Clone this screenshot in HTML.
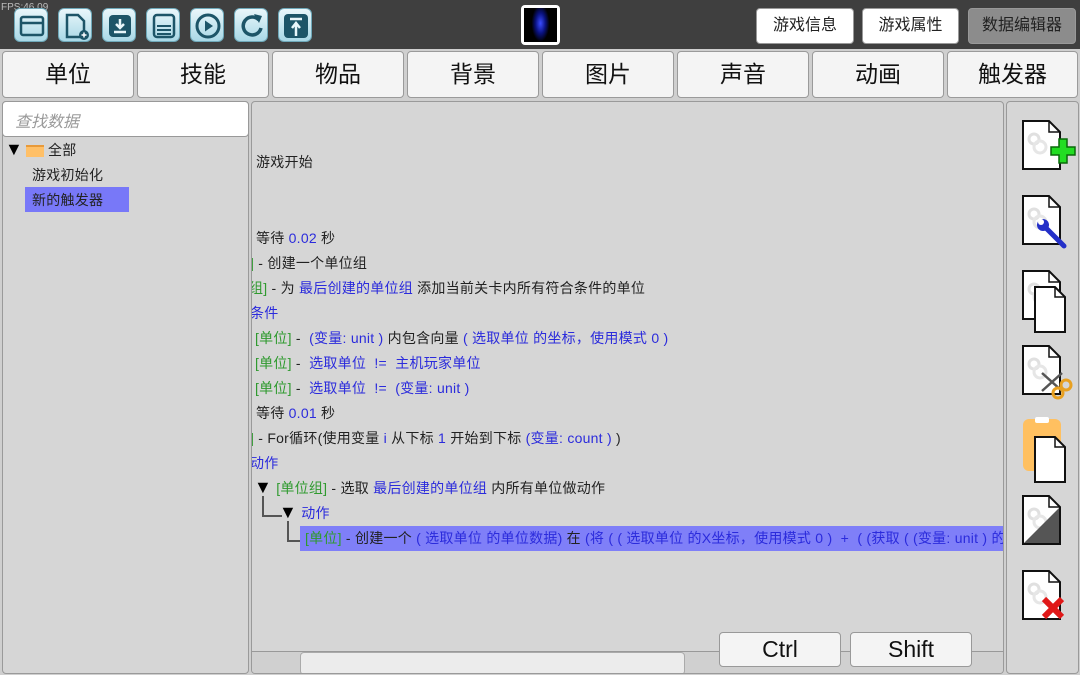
<!DOCTYPE html>
<html><head><meta charset="utf-8"><style>
*{margin:0;padding:0;box-sizing:border-box}
body{width:1080px;height:675px;background:#3f3f3f;position:relative;overflow:hidden;font-family:"Liberation Sans","Noto Sans CJK SC",sans-serif}
.abs{position:absolute}
.tb{position:absolute;top:8px;width:34px;height:34px;border-radius:6px;background:linear-gradient(#eaf7fb,#a9d8e6);border:1px solid #6fa9ba}
.tb svg{position:absolute;left:0;top:0}
.btn{position:absolute;top:8px;height:36px;background:#fff;border:1px solid #999;border-radius:4px;font-size:16px;color:#222;text-align:center;line-height:34px}
.tab{position:absolute;top:51px;height:47px;background:#f4f4f4;border:1px solid #9a9a9a;border-radius:4px;font-size:23px;color:#111;text-align:center;line-height:45px}
.panel{position:absolute;background:#d6d6d6;border:1px solid #9a9a9a;border-radius:4px}
.ln{position:absolute;white-space:nowrap;font-size:14px;color:#222;line-height:16px;letter-spacing:0.25px}
.b{color:#2b2bdc}.g{color:#2f9a2f}
.tri{font-size:18px;color:#000}
.kb{position:absolute;top:632px;height:35px;background:#f4f4f4;border:1px solid #999;border-radius:4px;font-size:23px;text-align:center;line-height:33px;color:#111}
</style></head><body>
<div class="abs" style="left:1px;top:2px;font-size:10px;color:#bbb">FPS:46.09</div>
<div class="tb" style="left:14px"><svg width="34" height="34"><rect x="6" y="8" width="22" height="18" rx="2" fill="none" stroke="#1d5568" stroke-width="2.5"/><line x1="6" y1="14" x2="28" y2="14" stroke="#1d5568" stroke-width="2.5"/></svg></div>
<div class="tb" style="left:58px"><svg width="34" height="34"><path d="M8 6h11l6 6v16H8z" fill="none" stroke="#1d5568" stroke-width="2.5"/><circle cx="25" cy="26" r="5" fill="#1d5568"/><path d="M22.5 26h5M25 23.5v5" stroke="#fff" stroke-width="1.5"/></svg></div>
<div class="tb" style="left:102px"><svg width="34" height="34"><rect x="6" y="6" width="22" height="22" rx="4" fill="#1d5568"/><path d="M17 10v9M13 15l4 4 4-4M11 23h12" stroke="#e8f6fa" stroke-width="2.5" fill="none"/></svg></div>
<div class="tb" style="left:146px"><svg width="34" height="34"><rect x="7" y="6" width="20" height="22" rx="3" fill="none" stroke="#1d5568" stroke-width="2.5"/><path d="M10 17h14M10 21h14M10 25h14" stroke="#1d5568" stroke-width="2"/></svg></div>
<div class="tb" style="left:190px"><svg width="34" height="34"><circle cx="17" cy="17" r="11" fill="none" stroke="#1d5568" stroke-width="3"/><path d="M14 11.5l8 5.5-8 5.5z" fill="#1d5568"/></svg></div>
<div class="tb" style="left:234px"><svg width="34" height="34"><path d="M24 11a9 9 0 1 0 2 8" fill="none" stroke="#1d5568" stroke-width="3.5"/><path d="M19 5l8 2-3 7z" fill="#1d5568"/></svg></div>
<div class="tb" style="left:278px"><svg width="34" height="34"><rect x="5" y="5" width="24" height="24" rx="4" fill="#1d5568"/><path d="M11 10h12M17 27V15M13 19l4-5 4 5" stroke="#e8f6fa" stroke-width="2.5" fill="none"/></svg></div>
<div class="abs" style="left:521px;top:5px;width:39px;height:40px;background:#fff;border-radius:4px;padding:3px"><div style="width:100%;height:100%;background:radial-gradient(ellipse 30% 60% at 50% 45%,#3a4cff 0,#0a1280 50%,#000 90%)"></div></div>
<div class="btn" style="left:756px;width:98px">游戏信息</div>
<div class="btn" style="left:862px;width:97px">游戏属性</div>
<div class="btn" style="left:968px;width:108px;background:#8c8c8c;color:#222">数据编辑器</div>
<div class="abs" style="left:0;top:49px;width:1080px;height:626px;background:#cfcfcf"></div>
<div class="tab" style="left:2px;width:132px">单位</div>
<div class="tab" style="left:137px;width:132px">技能</div>
<div class="tab" style="left:272px;width:132px">物品</div>
<div class="tab" style="left:407px;width:132px">背景</div>
<div class="tab" style="left:542px;width:132px">图片</div>
<div class="tab" style="left:677px;width:132px">声音</div>
<div class="tab" style="left:812px;width:132px">动画</div>
<div class="tab" style="left:947px;width:131px">触发器</div>
<div class="panel" style="left:2px;top:101px;width:247px;height:573px"></div>
<div class="abs" style="left:2px;top:101px;width:247px;height:36px;background:#fff;border:1px solid #999;border-radius:4px;font-size:16px;color:#999;font-style:italic;padding:6px 12px">查找数据</div>
<div class="abs tri" style="left:5px;top:139px">▼</div>
<div class="abs" style="left:26px;top:145px;width:18px;height:12px;background:#ffc068;border-top:2px solid #e89a3a"></div>
<div class="ln" style="left:48px;top:142px">全部</div>
<div class="ln" style="left:32px;top:167px">游戏初始化</div>
<div class="abs" style="left:25px;top:187px;width:104px;height:25px;background:#7878f8"></div>
<div class="ln" style="left:32px;top:192px">新的触发器</div>
<div class="panel" style="left:251px;top:101px;width:753px;height:573px;overflow:hidden">
<div class="ln" style="left:4px;top:52px">游戏开始</div>
<div class="ln" style="left:4px;top:128px">等待 <span class="b">0.02</span> 秒</div>
<div class="ln" style="left:-2px;top:153px"><span class="g">]</span> - 创建一个单位组</div>
<div class="ln" style="left:-3px;top:178px"><span class="g">组]</span> - 为 <span class="b">最后创建的单位组</span> 添加当前关卡内所有符合条件的单位</div>
<div class="ln b" style="left:-2px;top:203px">条件</div>
<div class="ln" style="left:3px;top:228px"><span class="g">[单位]</span> - &nbsp;<span class="b">(变量: unit )</span> 内包含向量 <span class="b">( 选取单位 的坐标，使用模式 0 )</span></div>
<div class="ln" style="left:3px;top:253px"><span class="g">[单位]</span> - &nbsp;<span class="b">选取单位 &nbsp;!= &nbsp;主机玩家单位</span></div>
<div class="ln" style="left:3px;top:278px"><span class="g">[单位]</span> - &nbsp;<span class="b">选取单位 &nbsp;!= &nbsp;(变量: unit )</span></div>
<div class="ln" style="left:4px;top:303px">等待 <span class="b">0.01</span> 秒</div>
<div class="ln" style="left:-2px;top:328px"><span class="g">]</span> - For循环(使用变量 <span class="b">i</span> 从下标 <span class="b">1</span> 开始到下标 <span class="b">(变量: count ) </span>)</div>
<div class="ln b" style="left:-2px;top:353px">动作</div>
<div class="ln" style="left:2px;top:377px"><span class="tri">▼</span> <span class="g">[单位组]</span> - 选取 <span class="b">最后创建的单位组</span> 内所有单位做动作</div>
<div class="abs" style="left:10px;top:394px;width:2px;height:20px;background:#555"></div>
<div class="abs" style="left:10px;top:413px;width:20px;height:2px;background:#555"></div>
<div class="ln" style="left:27px;top:402px"><span class="tri">▼</span> <span class="b">动作</span></div>
<div class="abs" style="left:35px;top:419px;width:2px;height:20px;background:#555"></div>
<div class="abs" style="left:35px;top:438px;width:14px;height:2px;background:#555"></div>
<div class="abs" style="left:48px;top:424px;width:704px;height:25px;background:#7f7ff8"></div>
<div class="ln" style="left:53px;top:428px"><span class="g">[单位]</span> - 创建一个 <span class="b">( 选取单位 的单位数据)</span> 在 <span class="b">(将 ( ( 选取单位 的X坐标，使用模式 0 ) &nbsp;+ &nbsp;( (获取 ( (变量: unit ) 的</span></div>
<div class="abs" style="left:0;top:549px;width:753px;height:24px;background:#d0d0d0;border-top:1px solid #999"></div>
<div class="abs" style="left:48px;top:550px;width:385px;height:23px;background:#ececec;border:1px solid #aaa;border-radius:4px"></div>
</div>
<div class="kb" style="left:719px;width:122px">Ctrl</div>
<div class="kb" style="left:850px;width:122px">Shift</div>
<div class="panel" style="left:1006px;top:101px;width:73px;height:573px"></div>
<svg class="abs" style="left:1006px;top:101px" width="74" height="574">
<defs>
<g id="doc"><path d="M0 0h26l11 11v37H0z" fill="#fff" stroke="#111" stroke-width="2"/><path d="M26 0v11h11" fill="none" stroke="#111" stroke-width="1.5"/><circle cx="11" cy="18" r="5" fill="none" stroke="#e0e0e0" stroke-width="3"/><circle cx="17" cy="26" r="6" fill="none" stroke="#e6e6e6" stroke-width="3"/></g>
</defs>
<use href="#doc" x="17" y="20"/>
<path d="M45 46h8v-8h8v8h8v8h-8v8h-8v-8h-8z" fill="#22dd22" stroke="#0a6a0a" stroke-width="1.5"/>
<use href="#doc" x="17" y="95"/>
<path d="M38 125l20 20" stroke="#2430c8" stroke-width="5" stroke-linecap="round"/><circle cx="37" cy="124" r="6" fill="#2430c8"/><circle cx="35" cy="121" r="3" fill="#fff"/>
<use href="#doc" x="17" y="170"/>
<path d="M29 186h20l10 10v35H29z" fill="#fff" stroke="#111" stroke-width="2"/><path d="M49 186v10h10" fill="none" stroke="#111" stroke-width="1.5"/>
<use href="#doc" x="17" y="245"/>
<path d="M36 272l20 18M56 272l-20 18" stroke="#555" stroke-width="2.5"/><circle cx="52" cy="292" r="5" fill="none" stroke="#e8a020" stroke-width="3"/><circle cx="60" cy="284" r="5" fill="none" stroke="#e8a020" stroke-width="3"/>
<rect x="17" y="318" width="38" height="52" rx="6" fill="#ffc060"/><rect x="29" y="316" width="14" height="6" rx="2" fill="#fff"/>
<path d="M29 336h20l10 10v35H29z" fill="#fff" stroke="#111" stroke-width="2"/><path d="M49 336v10h10" fill="none" stroke="#111" stroke-width="1.5"/>
<use href="#doc" x="17" y="395"/>
<path d="M18 442L53 407v35z" fill="#555"/>
<use href="#doc" x="17" y="470"/>
<path d="M38 498l18 18M56 498l-18 18" stroke="#e01818" stroke-width="6"/>
</svg>
</body></html>
